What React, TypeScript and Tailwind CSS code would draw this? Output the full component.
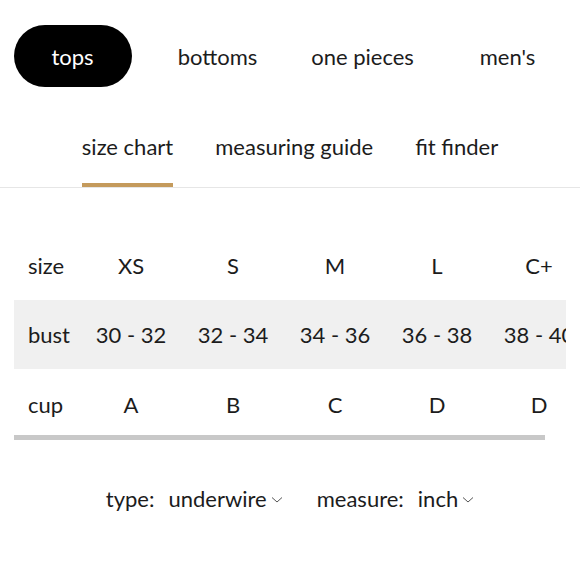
import React from "react";

const cols = ["XS", "S", "M", "L", "C+"];
const bust = ["30 - 32", "32 - 34", "34 - 36", "36 - 38", "38 - 40"];
const cup = ["A", "B", "C", "D", "D"];

function Chevron() {
  return (
    <svg width="12" height="8" viewBox="0 0 12 8" className="ml-[4px] mt-[2px]">
      <path d="M1 1.5 L6 6 L11 1.5" fill="none" stroke="#555" strokeWidth="1" />
    </svg>
  );
}

function Row({ label, values, bg, h }: { label: string; values: string[]; bg?: boolean; h: string }) {
  return (
    <div className={`flex items-center ${h} ${bg ? "bg-[#f0f0f0]" : ""}`}>
      <div className="w-[66px] shrink-0 pl-[14px]">{label}</div>
      {values.map((v, i) => (
        <div key={i} className="w-[102px] shrink-0 text-center whitespace-nowrap">
          {v}
        </div>
      ))}
    </div>
  );
}

export default function App() {
  return (
    <div
      className="w-[580px] h-[580px] bg-white text-[#1c1c1c] overflow-hidden"
      style={{ fontFamily: "Lato, 'Noto Sans', sans-serif" }}
    >
      <div className="grid grid-cols-4 pt-[25px] text-[22px]">
        <div className="flex justify-center">
          <div className="w-[118px] h-[62px] rounded-full bg-black text-white flex items-center justify-center">
            tops
          </div>
        </div>
        <div className="flex items-center justify-center">bottoms</div>
        <div className="flex items-center justify-center">one pieces</div>
        <div className="flex items-center justify-center">men's</div>
      </div>
      <div className="mt-[39px] border-b border-[#e6e6e6] flex justify-center gap-[42px] text-[22px]">
        <div className="flex flex-col items-center">
          <div className="h-[40px] flex items-center">size chart</div>
          <div className="h-[4px] mt-[17px] w-full bg-[#c49a5c]" />
        </div>
        <div className="h-[40px] flex items-center">measuring guide</div>
        <div className="h-[40px] flex items-center">fit finder</div>
      </div>
      <div className="mx-[14px] mt-[44px] overflow-hidden text-[22px]">
        <div className="w-[600px]">
          <Row label="size" values={cols} h="h-[68px] pb-[2px]" />
          <Row label="bust" values={bust} bg h="h-[69px]" />
          <Row label="cup" values={cup} h="h-[66px] pt-[4px]" />
        </div>
      </div>
      <div className="ml-[14px] w-[531px] h-[5px] bg-[#c8c8c8]" />
      <div className="mt-[42px] flex justify-center items-center text-[22px] gap-[34px]">
        <div className="flex items-center">
          <span>type:</span>
          <span className="ml-[14px]">underwire</span>
          <Chevron />
        </div>
        <div className="flex items-center">
          <span>measure:</span>
          <span className="ml-[14px]">inch</span>
          <Chevron />
        </div>
      </div>
    </div>
  );
}
